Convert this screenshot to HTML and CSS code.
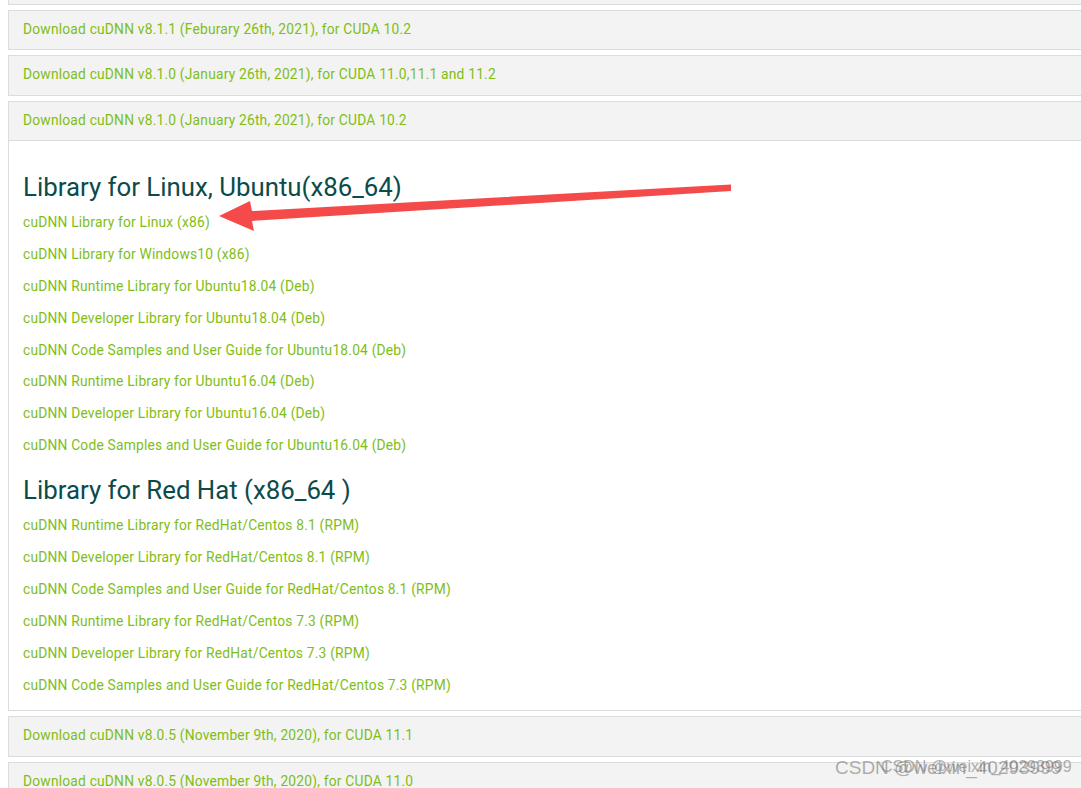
FILE: index.html
```html
<!DOCTYPE html>
<html>
<head>
<meta charset="utf-8">
<link rel="stylesheet" href="styles.css">
</head>
<body>
<div class="page">
  <div class="acc acc-cut"></div>
  <div class="acc"><a class="acc-head">Download cuDNN v8.1.1 (Feburary 26th, 2021), for CUDA 10.2</a></div>
  <div class="acc"><a class="acc-head">Download cuDNN v8.1.0 (January 26th, 2021), for CUDA 11.0,11.1 and 11.2</a></div>
  <div class="acc open">
    <a class="acc-head">Download cuDNN v8.1.0 (January 26th, 2021), for CUDA 10.2</a>
    <div class="acc-body">
      <h2 class="lib-title first">Library for Linux, Ubuntu(x86_64)</h2>
      <ul class="links">
        <li><a>cuDNN Library for Linux (x86)</a></li>
        <li><a>cuDNN Library for Windows10 (x86)</a></li>
        <li><a>cuDNN Runtime Library for Ubuntu18.04 (Deb)</a></li>
        <li><a>cuDNN Developer Library for Ubuntu18.04 (Deb)</a></li>
        <li><a>cuDNN Code Samples and User Guide for Ubuntu18.04 (Deb)</a></li>
        <li><a>cuDNN Runtime Library for Ubuntu16.04 (Deb)</a></li>
        <li><a>cuDNN Developer Library for Ubuntu16.04 (Deb)</a></li>
        <li><a>cuDNN Code Samples and User Guide for Ubuntu16.04 (Deb)</a></li>
      </ul>
      <h2 class="lib-title">Library for Red Hat (x86_64 )</h2>
      <ul class="links">
        <li><a>cuDNN Runtime Library for RedHat/Centos 8.1 (RPM)</a></li>
        <li><a>cuDNN Developer Library for RedHat/Centos 8.1 (RPM)</a></li>
        <li><a>cuDNN Code Samples and User Guide for RedHat/Centos 8.1 (RPM)</a></li>
        <li><a>cuDNN Runtime Library for RedHat/Centos 7.3 (RPM)</a></li>
        <li><a>cuDNN Developer Library for RedHat/Centos 7.3 (RPM)</a></li>
        <li><a>cuDNN Code Samples and User Guide for RedHat/Centos 7.3 (RPM)</a></li>
      </ul>
    </div>
  </div>
  <div class="acc"><a class="acc-head">Download cuDNN v8.0.5 (November 9th, 2020), for CUDA 11.1</a></div>
  <div class="acc"><a class="acc-head">Download cuDNN v8.0.5 (November 9th, 2020), for CUDA 11.0</a></div>
</div>
<svg class="arrow" width="1081" height="788" viewBox="0 0 1081 788">
  <polygon points="731,184.5 731,191 252,221 254,231 219,216 250,201 252,211" fill="#f44a4a"/>
</svg>
<div class="watermark"><span class="wm1">CSDN @weixin_40293999</span><span class="wm2">CSDN @weixin_40293999</span></div>
</body>
</html>
```
FILE: styles.css
```css
html, body {
  margin: 0;
  padding: 0;
  background: #ffffff;
  overflow: hidden;
  height: 788px;
}
.page {
  padding: 0 0 0 8px;
  margin-top: -35.5px;
  margin-right: -20px;
  display: flex;
  flex-direction: column;
  gap: 5px;
  font-family: Roboto, "Liberation Sans", sans-serif;
}
.acc {
  border: 1px solid #dcdcdc;
  border-right: none;
  background: #ffffff;
}
.acc-cut {
  height: 38px;
  background: #f3f3f3;
}
.acc-head {
  display: block;
  height: 38.5px;
  line-height: 37px;
  padding-left: 14px;
  background: #f3f3f3;
  color: #80be14;
  font-size: 13.8px;
  letter-spacing: 0.2px;
}
.open .acc-head {
  border-bottom: 1px solid #dcdcdc;
}
.acc-body {
  padding: 31px 0 3px 14px;
}
.lib-title {
  margin: 0;
  font-weight: 400;
  font-size: 25.8px;
  line-height: 30px;
  color: #0c4b4b;
}
.links {
  list-style: none;
  margin: 0;
  padding: 11px 0 0 0;
}
.links li {
  height: 31.9px;
  line-height: 18px;
  font-size: 13.8px;
  color: #80be14;
  letter-spacing: 0.2px;
}
.links + .lib-title {
  margin-top: 7px;
}
.arrow {
  position: absolute;
  left: 0;
  top: 0;
  pointer-events: none;
}
.watermark {
  position: absolute;
  left: 835px;
  top: 757px;
  width: 240px;
  height: 24px;
  font-family: "Liberation Sans", Arial, sans-serif;
  color: rgba(110,110,110,0.55);
}
.wm1, .wm2 {
  position: absolute;
  top: 0;
  white-space: nowrap;
}
.wm1 {
  left: 0;
  font-size: 19px;
}
.wm2 {
  left: 46px;
  font-size: 16px;
  top: 1px;
}
```
